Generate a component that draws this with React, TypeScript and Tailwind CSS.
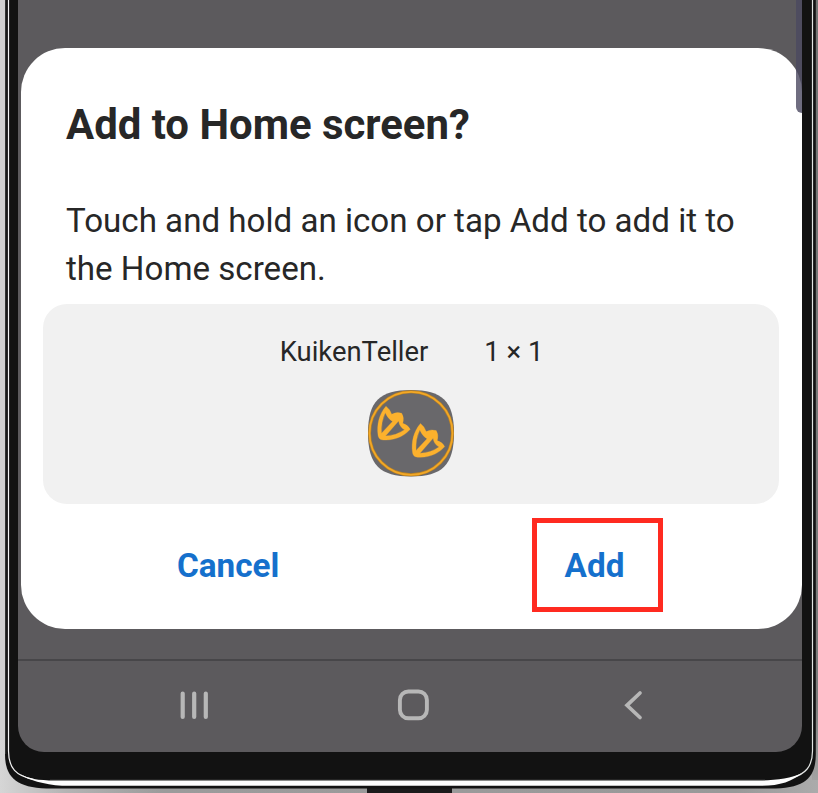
function PhoneFrame() {
  return (
    <svg className="absolute inset-0" width="818" height="793" viewBox="0 0 818 793" aria-hidden="true">
      <defs>
        <linearGradient id="desk" x1="0" x2="1" y1="0" y2="0">
          <stop offset="0" stopColor="#d6d6d6" />
          <stop offset="0.08" stopColor="#b4b4b4" />
          <stop offset="0.2" stopColor="#9b9b9b" />
          <stop offset="0.9" stopColor="#999999" />
          <stop offset="1" stopColor="#ababab" />
        </linearGradient>
        <linearGradient id="side" x1="0" x2="0" y1="0" y2="1">
          <stop offset="0" stopColor="#737574" />
          <stop offset="0.9" stopColor="#7d7e7d" />
          <stop offset="1" stopColor="#a2a2a2" />
        </linearGradient>
      </defs>
      <rect width="818" height="793" fill="url(#desk)" />
      <rect width="6" height="740" fill="#d0d0d0" />
      <rect x="812" width="6" height="780" fill="url(#side)" />
      <rect x="367" y="786" width="85" height="7" fill="#1b1a1b" />
      <path d="M5 -5H815.8V754C815.8 778 805 788.6 770 788.6H52C17 788.6 5 778 5 754Z" fill="#121212" />
      <path d="M5.7 0V754" stroke="#454745" strokeWidth="0.8" />
      <path d="M8.500 0V751C8.500 768 16 776 34 779.500" fill="none" stroke="#f4f4f4" strokeWidth="1.200" />
      <path d="M812.500 0V751C812.500 767 805 774 792 778" fill="none" stroke="#e2e5e3" strokeWidth="1.200" />
      <path d="M20 774C28 778.500 38 780.500 55 780.500H762C778 780 792 778 802 773C793 781 780 785.800 762 785.800H62C44 784.500 28 780 20 774Z" fill="#fdfdfd" />
      <path d="M50 780.3H765" stroke="#8b8d8b" strokeWidth="0.8" />
    </svg>
  );
}

const FOOT =
  "M19 17.200Q23.300 20.500 24.700 25.300Q29.500 22.500 34.700 24.300Q37.500 29 35.700 34.300Q41 36 43.200 40.300C38.500 46 30 50.800 19 51C14 51.300 11.500 50 11 46C9.700 36 12 25 19 17.200ZM18.300 23.800Q13.800 33 14.500 44.200L25.500 32.500Q21 30 18.300 23.800ZM31.600 32L18.500 47Q29 46.800 37.500 40.800Q32.500 38 31.600 32Z";

function AppIcon() {
  return (
    <svg width="88" height="88" viewBox="0 0 88 88" aria-label="KuikenTeller">
      <path d="M44 1C75 1 87 12 87 44S75 87.500 44 87.500S1 76 1 44S13 1 44 1Z" fill="#69686b" />
      <circle cx="44" cy="44.300" r="41.500" fill="none" stroke="#bd8220" strokeWidth="3" />
      <circle cx="44" cy="44.300" r="41.500" fill="none" stroke="#f2a827" strokeWidth="1.700" />
      <g fill="#fcb12d" fillRule="evenodd" stroke="#fcb12d" strokeWidth="0.300" strokeLinejoin="round">
        <path d={FOOT} />
        <path d={FOOT} transform="translate(34.500 17.300)" />
      </g>
    </svg>
  );
}

function NavBar() {
  return (
    <nav className="flex h-[93px] items-start border-t-2 border-[#474649] pt-[28px] pl-[161px] text-[#b7b7b7]">
      <button aria-label="Recent apps">
        <svg width="30" height="34" viewBox="0 0 30 34" stroke="currentColor" strokeWidth="4.200" strokeLinecap="round">
          <path d="M3.700 4.500V28M15.200 4.500V28M26.800 4.500V28" />
        </svg>
      </button>
      <button aria-label="Home" className="ml-[187px]">
        <svg width="34" height="34" viewBox="0 0 34 34" fill="none" stroke="currentColor" strokeWidth="3.900">
          <rect x="3.900" y="2.500" width="27" height="26.800" rx="8.500" />
        </svg>
      </button>
      <button aria-label="Back" className="ml-[192px]">
        <svg width="24" height="34" viewBox="0 0 24 34" fill="none" stroke="currentColor" strokeWidth="3.700" strokeLinecap="round">
          <path d="M18 4L5 16.300L18 28.500" />
        </svg>
      </button>
    </nav>
  );
}

function AddDialog() {
  return (
    <section className="relative ml-[3px] flex h-[581px] w-[781px] flex-col rounded-[44px] bg-white text-[#272727]">
      <h1 className="mt-[53px] ml-[45px] h-[48px] whitespace-nowrap text-[41.900px] leading-[48px] font-bold">Add to Home screen?</h1>
      <p className="mt-[48px] ml-[45px] h-[96px] whitespace-nowrap text-[33.130px] leading-[48px]">
        Touch and hold an icon or tap Add to add it to
        <br />
        the Home screen.
      </p>
      <div className="mt-[11px] ml-[22px] flex h-[200px] w-[736px] flex-col items-center rounded-[24px] bg-[#f1f1f1]">
        <div className="mt-[32px] flex h-[32px] gap-[56px] pl-[1px] text-[27.400px] leading-[32px]">
          <span>KuikenTeller</span>
          <span>1 × 1</span>
        </div>
        <div className="mt-[21px]">
          <AppIcon />
        </div>
      </div>
      <div className="mt-[14px] flex items-center text-[33.300px] font-bold text-[#1570cc]">
        <button className="ml-[156px] w-[104px] pt-[2px] text-left">Cancel</button>
        <button className="ml-[251px] flex h-[94px] w-[131px] items-center justify-center border-[5px] border-[#ff2a20] pt-[2px] pr-[6px]">Add</button>
      </div>
    </section>
  );
}

export default function App() {
  return (
    <div className="relative h-[793px] w-[818px] overflow-hidden font-['Roboto',sans-serif]">
      <PhoneFrame />
      <main className="relative ml-[18px] flex h-[752px] w-[784px] flex-col overflow-hidden rounded-b-[26px] bg-[#5c5a5d] pt-[48px]">
        <AddDialog />
        <div className="absolute top-0 right-0 h-[113px] w-[6px] rounded-bl-[7px] bg-[#4b4860]/80" />
        <div className="mt-[30px]">
          <NavBar />
        </div>
      </main>
    </div>
  );
}
